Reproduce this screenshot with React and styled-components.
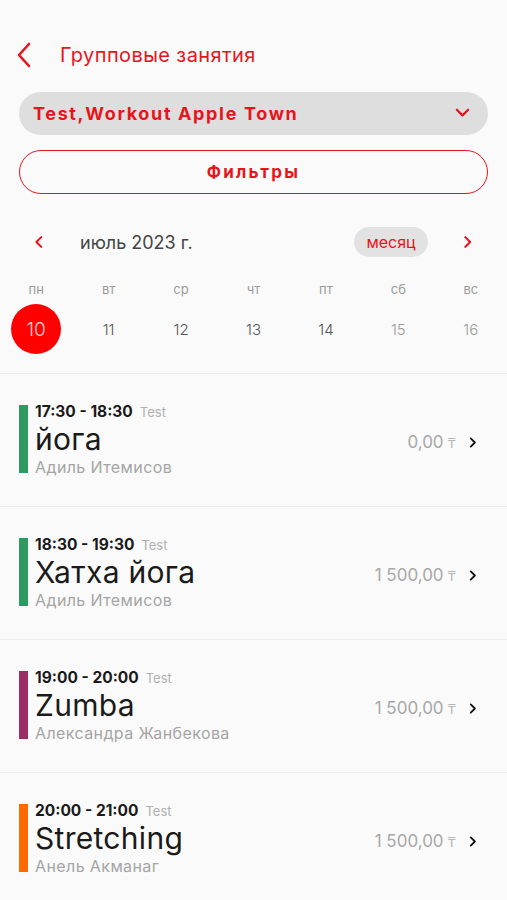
import React from "react";
import styled, { createGlobalStyle } from "styled-components";

const Global = createGlobalStyle`
  html, body { margin: 0; padding: 0; background: #fafafa; }
  body { font-family: "Inter", "Noto Sans", sans-serif; -webkit-font-smoothing: antialiased; }
  * { box-sizing: border-box; }
`;

const RED = "#e8141c";

const Page = styled.div`
  width: 507px;
  min-height: 900px;
  background: #fafafa;
  padding-top: 38px;
  overflow: hidden;
`;

const Header = styled.div`
  display: flex;
  align-items: center;
  height: 34px;
  padding-left: 15px;
  gap: 27px;
`;

const Title = styled.div`
  color: ${RED};
  font-size: 20px;
  font-weight: 400;
  letter-spacing: 0.4px;
`;

const Controls = styled.div`
  display: flex;
  flex-direction: column;
  gap: 15px;
  padding: 20px 19px 0 19px;
`;

const Select = styled.div`
  height: 43px;
  border-radius: 22px;
  background: #dedede;
  display: flex;
  align-items: center;
  justify-content: space-between;
  padding: 0 18px 0 14px;
  color: ${RED};
  font-weight: 700;
  font-size: 18px;
  letter-spacing: 1.65px;
`;

const FilterButton = styled.div`
  height: 44px;
  border-radius: 22px;
  border: 1.5px solid ${RED};
  display: flex;
  align-items: center;
  justify-content: center;
  color: ${RED};
  font-weight: 700;
  font-size: 17px;
  letter-spacing: 2.2px;
`;

const MonthRow = styled.div`
  display: flex;
  align-items: center;
  height: 32px;
  margin-top: 32px;
  padding: 0 32px 0 34px;
`;

const MonthLabel = styled.div`
  flex: 1;
  margin-left: 33px;
  font-size: 18px;
  color: #444;
`;

const Pill = styled.div`
  height: 30px;
  width: 74px;
  border-radius: 15px;
  background: #e2e2e2;
  color: ${RED};
  font-size: 16px;
  display: flex;
  align-items: center;
  justify-content: center;
  margin-right: 34px;
`;

const WeekGrid = styled.div`
  display: grid;
  grid-template-columns: repeat(7, 1fr);
  margin-top: 22px;
`;

const DayName = styled.div`
  text-align: center;
  font-size: 13px;
  color: #9a9a9a;
  height: 18px;
  line-height: 18px;
`;

const DayCell = styled.div`
  display: flex;
  justify-content: center;
  align-items: center;
  height: 50px;
  margin-top: 6px;
`;

const DayNum = styled.div`
  width: 50px;
  height: 50px;
  border-radius: 50%;
  display: flex;
  align-items: center;
  justify-content: center;
  background: ${(p) => (p.$active ? "#ff0000" : "transparent")};
  color: ${(p) => (p.$active ? "#ffd6d6" : p.$weekend ? "#9a9a9a" : "#555")};
  font-size: ${(p) => (p.$active ? "19px" : "15px")};
  font-weight: 300;
`;

const List = styled.div`
  margin-top: 19px;
  border-top: 1px solid #ececec;
`;

const Item = styled.div`
  height: 133px;
  border-bottom: 1px solid #ececec;
  display: flex;
  align-items: flex-start;
  padding: 31px 28px 0 19px;
`;

const Bar = styled.div`
  width: 9px;
  height: 68px;
  background: ${(p) => p.$color};
  margin-right: 7px;
  flex-shrink: 0;
`;

const Info = styled.div`
  flex: 1;
  display: flex;
  flex-direction: column;
  margin-top: -3px;
`;

const TimeLine = styled.div`
  display: flex;
  align-items: baseline;
  gap: 7px;
  height: 20px;
`;

const Time = styled.span`
  font-size: 15.5px;
  font-weight: 700;
  color: #1a1a1a;
`;

const Tag = styled.span`
  font-size: 13px;
  color: #b0b0b0;
`;

const ClassName = styled.div`
  font-size: 30px;
  color: #1a1a1a;
  line-height: 34px;
  margin-top: 0px;
  font-weight: 400;
  letter-spacing: 0.3px;
`;

const Trainer = styled.div`
  font-size: 16px;
  color: #a5a5a5;
  line-height: 20px;
  margin-top: 1px;
  letter-spacing: 0.4px;
`;

const Right = styled.div`
  display: flex;
  align-items: center;
  gap: 12px;
  margin-top: 27px;
`;

const Price = styled.div`
  font-size: 17px;
  color: #a8a8a8;
`;

const Tenge = styled.span`
  font-size: 13px;
  color: #b5b5b5;
  margin-left: 4px;
`;

const Chevron = ({ dir = "right", size = 14, stroke = "#000", width = 2.4, h = 14 }) => {
  const paths = {
    left: "M9 2 L3 8 L9 14",
    right: "M4 2 L10 8 L4 14",
    down: "M2 4 L8 10 L14 4",
  };
  return (
    <svg width={size} height={h} viewBox="0 0 16 16" fill="none">
      <path d={paths[dir]} stroke={stroke} strokeWidth={width} strokeLinecap="round" strokeLinejoin="round" />
    </svg>
  );
};

const days = [
  ["пн", 10],
  ["вт", 11],
  ["ср", 12],
  ["чт", 13],
  ["пт", 14],
  ["сб", 15],
  ["вс", 16],
];

const classes = [
  { time: "17:30 - 18:30", name: "йога", trainer: "Адиль Итемисов", price: "0,00", color: "#2f9a5f" },
  { time: "18:30 - 19:30", name: "Хатха йога", trainer: "Адиль Итемисов", price: "1 500,00", color: "#2f9a5f" },
  { time: "19:00 - 20:00", name: "Zumba", trainer: "Александра Жанбекова", price: "1 500,00", color: "#9b2e62" },
  { time: "20:00 - 21:00", name: "Stretching", trainer: "Анель Акманаг", price: "1 500,00", color: "#ff6a00" },
];

export default function App() {
  return (
    <Page>
      <Global />
      <Header>
        <svg width="18" height="26" viewBox="0 0 18 26" fill="none">
          <path d="M14 2 L4 13 L14 24" stroke={RED} strokeWidth="2.6" strokeLinecap="round" strokeLinejoin="round" />
        </svg>
        <Title>Групповые занятия</Title>
      </Header>
      <Controls>
        <Select>
          <span>Test,Workout Apple Town</span>
          <Chevron dir="down" stroke={RED} size={15} h={15} width={2.4} />
        </Select>
        <FilterButton>Фильтры</FilterButton>
      </Controls>
      <MonthRow>
        <Chevron dir="left" stroke={RED} size={13} h={14} width={2.6} />
        <MonthLabel>июль 2023 г.</MonthLabel>
        <Pill>месяц</Pill>
        <Chevron dir="right" stroke={RED} size={13} h={14} width={2.6} />
      </MonthRow>
      <WeekGrid>
        {days.map(([n]) => (
          <DayName key={n}>{n}</DayName>
        ))}
        {days.map(([n, d], i) => (
          <DayCell key={d}>
            <DayNum $active={i === 0} $weekend={i >= 5}>{d}</DayNum>
          </DayCell>
        ))}
      </WeekGrid>
      <List>
        {classes.map((c) => (
          <Item key={c.time}>
            <Bar $color={c.color} />
            <Info>
              <TimeLine>
                <Time>{c.time}</Time>
                <Tag>Test</Tag>
              </TimeLine>
              <ClassName>{c.name}</ClassName>
              <Trainer>{c.trainer}</Trainer>
            </Info>
            <Right>
              <Price>
                {c.price}
                <Tenge>₸</Tenge>
              </Price>
              <Chevron dir="right" stroke="#111" size={11} h={13} width={2.6} />
            </Right>
          </Item>
        ))}
      </List>
    </Page>
  );
}
